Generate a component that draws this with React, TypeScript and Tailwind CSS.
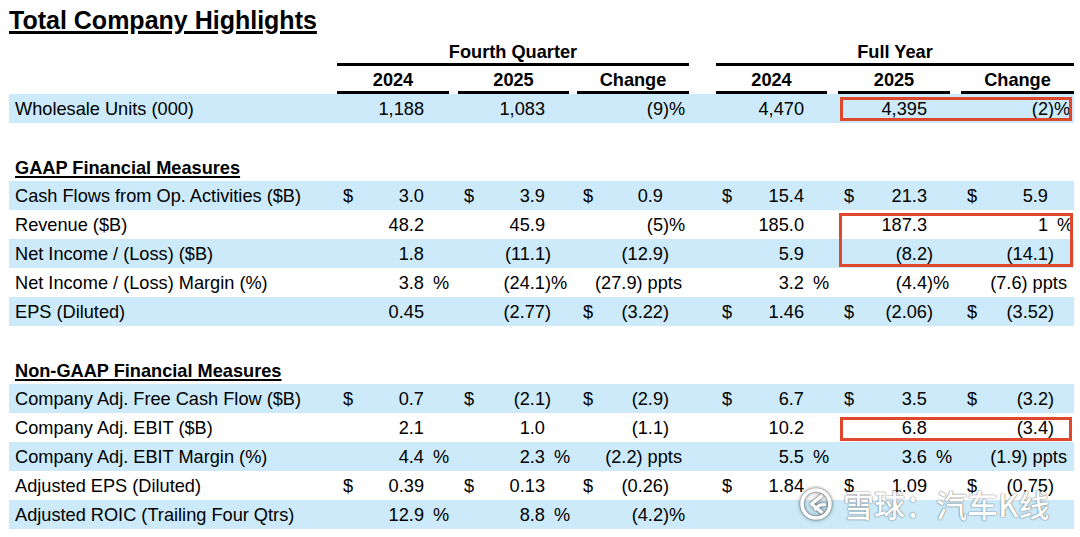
import React from "react";

// label | Q2024 | gap | Q2025 | gap | QChg | gap | FY2024 | gap | FY2025 | gap | FYChg
const GRID =
  "grid grid-cols-[328px_112px_9px_111px_8px_112px_27px_111px_11px_112px_11px_113px]";

// width of the suffix area after the digits, per value column
const SW = ["w-[25px]", "w-[24px]", "w-[26px]", "w-[23px]", "w-[23px]", "w-[26px]"];

type RowData = {
  label: string;
  vals: string[];
  blue?: boolean;
  box?: string;
};

const wholesale: RowData = {
  label: "Wholesale Units (000)",
  vals: ["1,188", "1,083", "(9)%", "4,470", "4,395", "(2)%"],
  blue: true,
  box: "left-[831px] w-[232px] top-[3px] h-[24px]",
};

const gaap: RowData[] = [
  {
    label: "Cash Flows from Op. Activities ($B)",
    vals: ["$3.0", "$3.9", "$0.9", "$15.4", "$21.3", "$5.9"],
    blue: true,
  },
  {
    label: "Revenue ($B)",
    vals: ["48.2", "45.9", "(5)%", "185.0", "187.3", "1 %"],
    box: "left-[830px] w-[234px] top-[3px] h-[54px]",
  },
  {
    label: "Net Income / (Loss) ($B)",
    vals: ["1.8", "(11.1)", "(12.9)", "5.9", "(8.2)", "(14.1)"],
    blue: true,
  },
  {
    label: "Net Income / (Loss) Margin (%)",
    vals: ["3.8 %", "(24.1)%", "(27.9) ppts", "3.2 %", "(4.4)%", "(7.6) ppts"],
  },
  {
    label: "EPS (Diluted)",
    vals: ["0.45", "(2.77)", "$(3.22)", "$1.46", "$(2.06)", "$(3.52)"],
    blue: true,
  },
];

const nonGaap: RowData[] = [
  {
    label: "Company Adj. Free Cash Flow ($B)",
    vals: ["$0.7", "$(2.1)", "$(2.9)", "$6.7", "$3.5", "$(3.2)"],
    blue: true,
  },
  {
    label: "Company Adj. EBIT ($B)",
    vals: ["2.1", "1.0", "(1.1)", "10.2", "6.8", "(3.4)"],
    box: "left-[831px] w-[232px] top-[4px] h-[24px]",
  },
  {
    label: "Company Adj. EBIT Margin (%)",
    vals: ["4.4 %", "2.3 %", "(2.2) ppts", "5.5 %", "3.6 %", "(1.9) ppts"],
    blue: true,
  },
  {
    label: "Adjusted EPS (Diluted)",
    vals: ["$0.39", "$0.13", "$(0.26)", "$1.84", "$1.09", "$(0.75)"],
  },
  {
    label: "Adjusted ROIC (Trailing Four Qtrs)",
    vals: ["12.9 %", "8.8 %", "(4.2)%", "", "", ""],
    blue: true,
  },
];

function Cell({ raw, sw }: { raw: string; sw: string }) {
  if (!raw) return <div />;
  const dollar = raw.startsWith("$");
  const v = dollar ? raw.slice(1) : raw;

  if (v.endsWith("ppts")) {
    return (
      <div className="flex pr-[7px]">
        <span className="flex-1 text-right whitespace-pre">{v}</span>
      </div>
    );
  }

  const m = v.match(/^(\(?[\d.,]+)(.*)$/);
  const num = m ? m[1] : v;
  // excel pads the " %" a bit wider than a plain space
  const suf = m ? m[2].replace(" %", "\u2002%") : "";

  return (
    <div className="flex">
      <span className="pl-[6px]">{dollar ? "$" : ""}</span>
      <span className="flex-1 text-right">{num}</span>
      <span className={`${sw} shrink-0 whitespace-pre`}>{suf}</span>
    </div>
  );
}

function Row({ row }: { row: RowData }) {
  const cells: React.ReactNode[] = [];
  row.vals.forEach((v, i) => {
    cells.push(<Cell key={i} raw={v} sw={SW[i]} />);
    if (i < 5) cells.push(<div key={"g" + i} />);
  });

  return (
    <div
      className={`${GRID} relative h-[29px] leading-[30px] ${
        row.blue ? "bg-[#cceaf9]" : ""
      }`}
    >
      <div className="pl-[6px] whitespace-nowrap">{row.label}</div>
      {cells}
      {row.box && (
        <div
          className={`absolute z-10 pointer-events-none border-[3px] border-[#e0482e] ${row.box}`}
        />
      )}
    </div>
  );
}

function Section({ title, rows }: { title: string; rows: RowData[] }) {
  return (
    <div className="mt-[36px]">
      <div className="pl-[6px] h-[18px] leading-[18px] mb-[4px] font-bold underline decoration-2 underline-offset-[2px]">
        {title}
      </div>
      {rows.map((r) => (
        <Row key={r.label} row={r} />
      ))}
    </div>
  );
}

function YearHead({ text, col }: { text: string; col: string }) {
  return (
    <div
      className={`${col} text-center leading-[18px] pb-[2px] border-b-[3px] border-black`}
    >
      {text}
    </div>
  );
}

function Watermark() {
  return (
    <div className="absolute z-20 left-[799px] top-[487px] flex items-center gap-[10px] text-white pointer-events-none">
      <svg
        width="34"
        height="34"
        viewBox="0 0 34 34"
        fill="none"
        className="[filter:drop-shadow(0_0_1px_rgba(0,0,0,0.55))_drop-shadow(0_0_2px_rgba(0,0,0,0.3))]"
      >
        <circle cx="17" cy="17" r="14" stroke="white" strokeWidth="3.6" />
        <path
          d="M22.5 9 L12.5 17 L22.5 25"
          stroke="white"
          strokeWidth="3.4"
          strokeLinecap="round"
          strokeLinejoin="round"
        />
        <path
          d="M16.5 22 Q19.5 17.5 25.5 17.5"
          stroke="white"
          strokeWidth="3.2"
          strokeLinecap="round"
        />
      </svg>
      <span className="text-[31px] leading-[32px] font-['Noto_Sans_CJK_SC',sans-serif] font-medium [text-shadow:0_0_1px_rgba(0,0,0,0.6),0_0_2px_rgba(0,0,0,0.35)]">
        雪球：汽车K线
      </span>
    </div>
  );
}

export default function App() {
  return (
    <div className="relative w-[1080px] h-[537px] overflow-hidden bg-white text-black text-[18.2px] font-['Liberation_Sans',Arial,sans-serif] pl-[9px] pr-[6px]">
      <div className="pt-[8px] leading-[25px] text-[25px] font-bold underline decoration-[3px] underline-offset-[2px]">
        Total Company Highlights
      </div>

      <div className={`${GRID} mt-[10px] font-bold`}>
        <YearHead text="Fourth Quarter" col="col-start-2 col-span-5" />
        <YearHead text="Full Year" col="col-start-8 col-span-5" />
      </div>

      <div className={`${GRID} mt-[5px] font-bold`}>
        <YearHead text="2024" col="col-start-2" />
        <YearHead text="2025" col="col-start-4" />
        <YearHead text="Change" col="col-start-6" />
        <YearHead text="2024" col="col-start-8" />
        <YearHead text="2025" col="col-start-10" />
        <YearHead text="Change" col="col-start-12" />
      </div>

      <Row row={wholesale} />

      <Section title="GAAP Financial Measures" rows={gaap} />
      <Section title="Non-GAAP Financial Measures" rows={nonGaap} />

      <Watermark />
    </div>
  );
}
